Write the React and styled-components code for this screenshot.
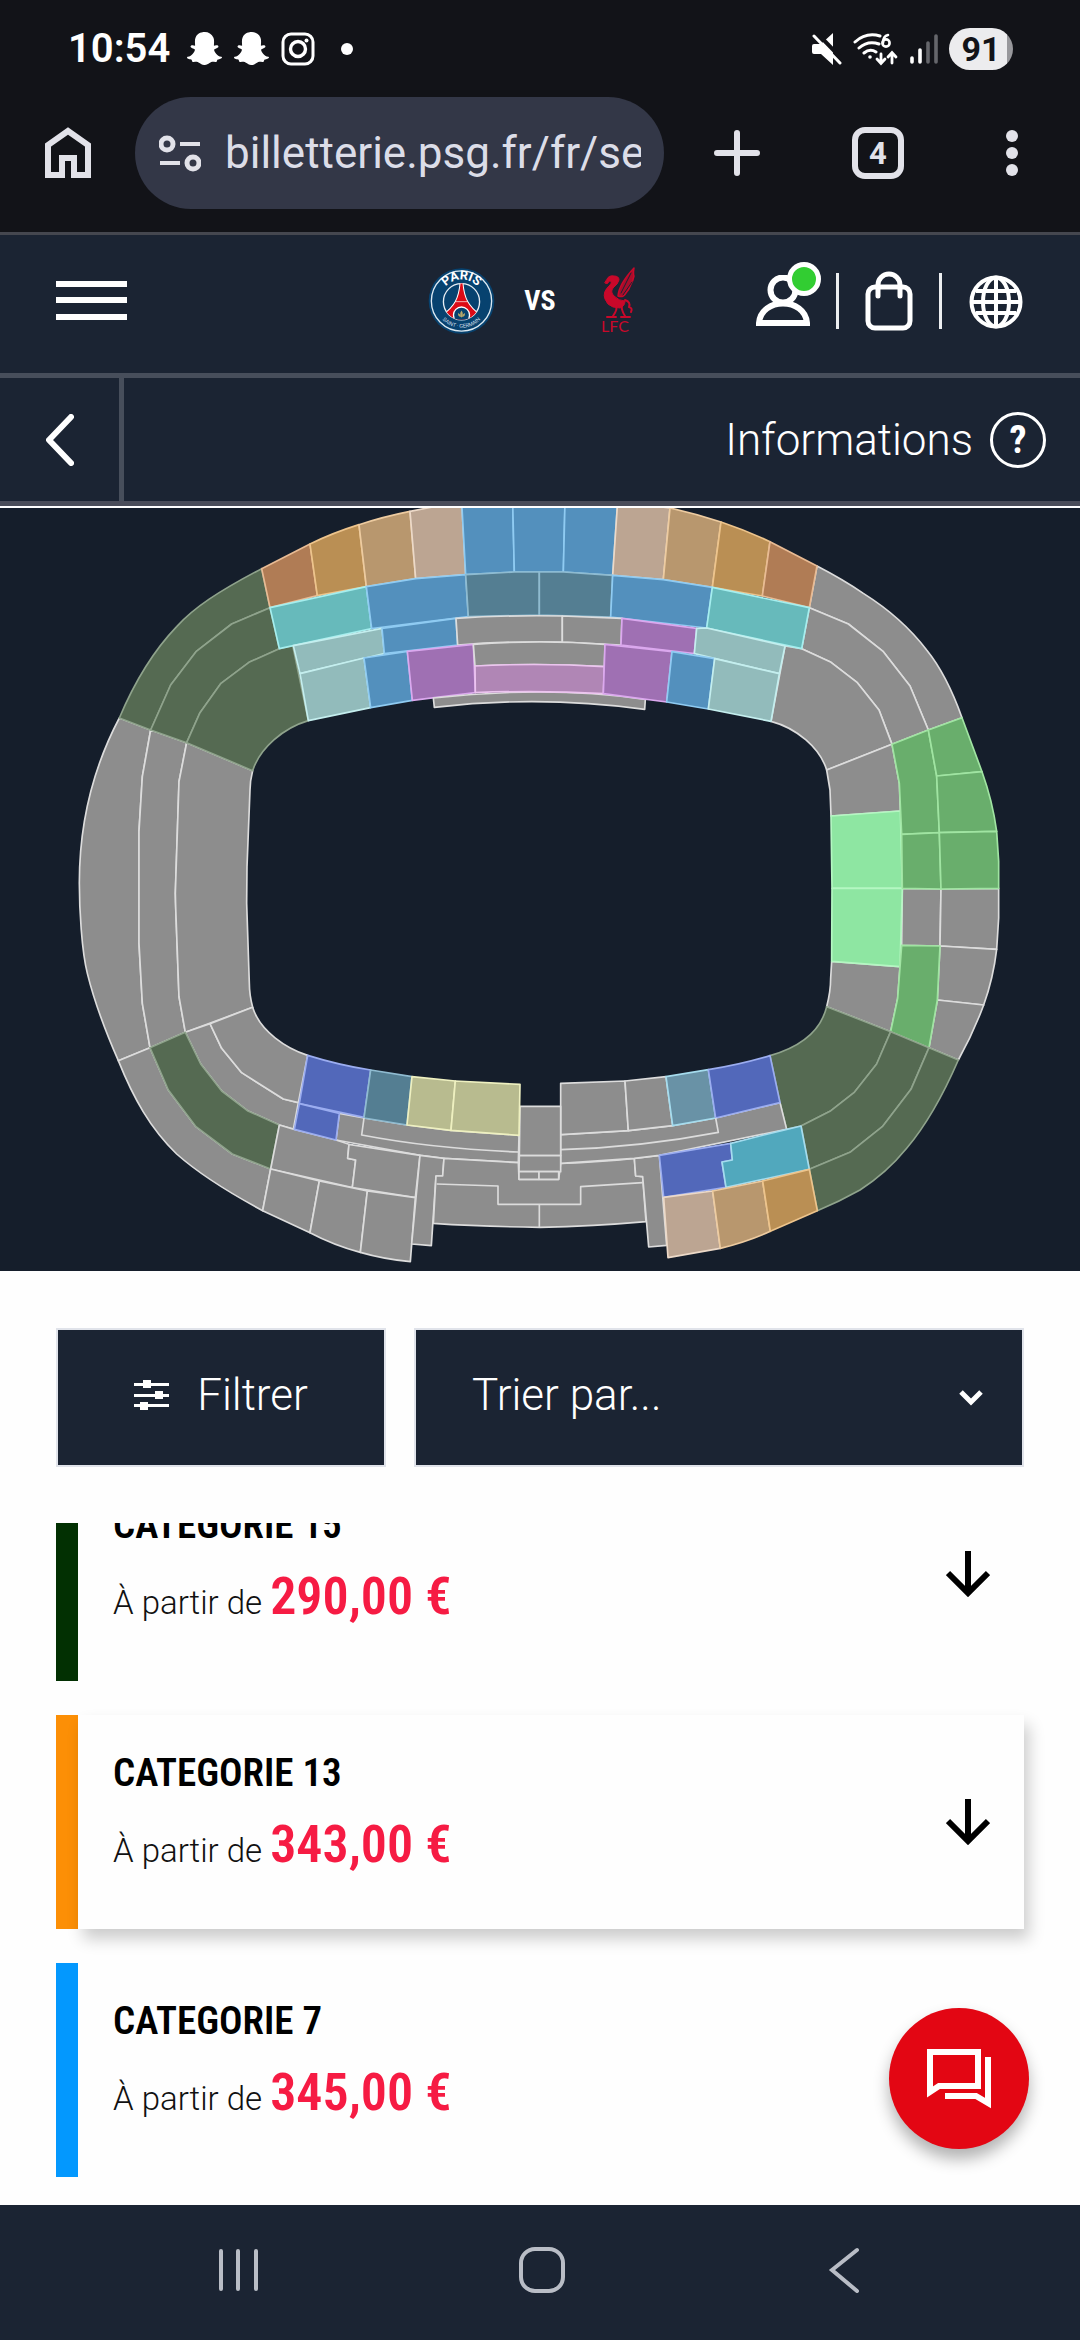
import React from 'react';
import styled, { createGlobalStyle } from 'styled-components';
import { FaSnapchatGhost } from 'react-icons/fa';

const NAVY = '#1b2433';
const CONDENSED = '"Roboto Condensed", "Liberation Sans Narrow", Roboto, sans-serif';

const GlobalStyle = createGlobalStyle`
  * {
    box-sizing: border-box;
  }
  body {
    margin: 0;
    background: #fefefe;
    font-family: Roboto, sans-serif;
  }
  button {
    display: flex;
    align-items: center;
    padding: 0;
    border: 0;
    background: none;
    color: inherit;
    font: inherit;
  }
  svg {
    display: block;
  }
`;

const Page = styled.div`
  display: flex;
  flex-direction: column;
  min-height: 100vh;
`;

const StatusBar = styled.div`
  display: flex;
  align-items: center;
  justify-content: space-between;
  height: 97px;
  padding: 0 67px 0 68px;
  background: #121318;
  color: #fff;
`;

const StatusGroup = styled.div`
  display: flex;
  align-items: center;
  gap: ${(props) => props.$gap}px;
`;

const Clock = styled.span`
  margin-right: 5px;
  font-size: 40px;
  font-weight: 600;
  line-height: 48px;
`;

const Dot = styled.span`
  width: 12px;
  height: 12px;
  margin-left: 14px;
  border-radius: 50%;
  background: #fff;
`;

const Battery = styled.span`
  width: 64px;
  height: 42px;
  border-radius: 21px;
  background: linear-gradient(90deg, #ececee 91%, #98989c 91%);
  color: #121318;
  font-size: 34px;
  font-weight: 700;
  line-height: 42px;
  text-align: center;
`;

const Toolbar = styled.div`
  display: flex;
  align-items: center;
  gap: 44px;
  padding: 0 52px 23px 45px;
  border-bottom: 3px solid #45474f;
  background: #121318;
  color: #e2e2e9;
`;

const AddressBar = styled.div`
  display: flex;
  flex: 1;
  align-items: center;
  gap: 24px;
  min-width: 0;
  height: 112px;
  padding: 0 23px 0 24px;
  border-radius: 56px;
  background: #333747;
`;

const AddressInput = styled.input`
  flex: 1;
  min-width: 0;
  padding: 0;
  border: 0;
  outline: 0;
  background: none;
  color: #dcdde8;
  font-family: Roboto, sans-serif;
  font-size: 44px;
`;

const ToolbarActions = styled.div`
  display: flex;
  align-items: center;
  gap: 92px;
  margin-left: 6px;
`;

const TabsButton = styled.button`
  justify-content: center;
  width: 52px;
  height: 52px;
  border: 6px solid #e2e2e9 !important;
  border-radius: 13px;
  font-size: 31px !important;
  font-weight: 700 !important;
`;

const MenuDots = styled.button`
  flex-direction: column;
  gap: 5px;
  width: 32px;
  span {
    width: 12px;
    height: 12px;
    border-radius: 50%;
    background: #e2e2e9;
  }
`;

const Header = styled.header`
  display: grid;
  grid-template-columns: 1fr auto 1fr;
  align-items: center;
  height: 143px;
  padding: 0 56px 6px;
  border-bottom: 5px solid #474e5b;
  background: ${NAVY};
  color: #fff;
`;

const Match = styled.div`
  display: flex;
  align-items: center;
  gap: 29px;
`;

const Versus = styled.span`
  font-family: ${CONDENSED};
  font-size: 28px;
  font-weight: 700;
  line-height: 32px;
`;

const HeaderActions = styled.div`
  display: flex;
  align-items: center;
  justify-content: flex-end;
  gap: 26px;
`;

const AccountButton = styled.button`
  position: relative;
`;

const OnlineBadge = styled.span`
  position: absolute;
  top: -13px;
  right: -11px;
  width: 34px;
  height: 34px;
  border: 5px solid #fff;
  border-radius: 50%;
  background: #32cd32;
`;

const Separator = styled.span`
  width: 3px;
  height: 56px;
  background: #eceef0;
`;

const SubHeader = styled.div`
  display: flex;
  justify-content: space-between;
  height: 130px;
  border-bottom: 2px solid #fff;
  box-shadow: inset 0 -5px #4a4d5a;
  padding-bottom: 5px;
  background: ${NAVY};
  color: #fff;
`;

const BackButton = styled.button`
  justify-content: center;
  width: 124px;
  border-right: 5px solid #474e5b !important;
`;

const InfoButton = styled.button`
  gap: 17px;
  padding-right: 34px !important;
  font-size: 44px !important;
  font-weight: 300 !important;
`;

const InfoMark = styled.span`
  width: 56px;
  height: 56px;
  border: 3px solid #fff;
  border-radius: 50%;
  font-family: ${CONDENSED};
  font-size: 38px;
  font-weight: 700;
  line-height: 50px;
  text-align: center;
`;

const MapPanel = styled.div`
  background: #151e2b;
  svg {
    width: 100%;
    height: auto;
  }
`;

const Filters = styled.div`
  display: grid;
  grid-template-columns: 330fr 610fr;
  gap: 28px;
  padding: 57px 56px 56px;
  color: #fff;
`;

const FilterButton = styled.button`
  justify-content: center;
  gap: 28px;
  height: 139px;
  padding-bottom: 6px !important;
  border: 2px solid #e0e3ea !important;
  background: ${NAVY} !important;
  font-size: 44px !important;
  font-weight: 300 !important;
`;

const SortBox = styled.div`
  display: grid;
  align-items: center;
  > * {
    grid-area: 1 / 1;
  }
  svg {
    justify-self: end;
    margin-right: 41px;
    pointer-events: none;
  }
`;

const SortSelect = styled.select`
  width: 100%;
  height: 139px;
  padding: 0 56px 6px;
  border: 2px solid #e0e3ea;
  border-radius: 0;
  appearance: none;
  background: ${NAVY};
  color: #fff;
  font-family: Roboto, sans-serif;
  font-size: 44px;
  font-weight: 300;
`;

const Offers = styled.main`
  position: relative;
  padding-bottom: 28px;
`;

/* the list is scrolled: the first card is cut by the top edge */
const OfferList = styled.div`
  display: flex;
  flex-direction: column;
  gap: 34px;
  padding: 0 56px;
  overflow: hidden;
  > :first-child {
    margin-top: -56px;
  }
`;

const Card = styled.article`
  display: flex;
  align-items: center;
  height: 214px;
  border-left: 22px solid ${(props) => props.$color};
`;

const CardBody = styled.div`
  display: flex;
  flex: 1;
  align-items: center;
  justify-content: space-between;
  height: 100%;
  padding: 0 34px 0 35px;
  background: #fefefe;
  box-shadow: ${(props) => (props.$raised ? '5px 10px 15px rgba(0, 0, 0, 0.2)' : 'none')};
`;

const CardText = styled.div`
  padding-bottom: 14px;
`;

const CardTitle = styled.h2`
  margin: 0;
  color: #000;
  font-family: ${CONDENSED};
  font-size: 39px;
  font-weight: 600;
  line-height: 48px;
`;

const CardPrice = styled.p`
  margin: 18px 0 0;
  color: #111;
  font-size: 33px;
  font-weight: 300;
  line-height: 60px;
  strong {
    color: #f61b43;
    font-family: ${CONDENSED};
    font-size: 52px;
    font-weight: 600;
  }
`;

const ChatButton = styled.button`
  position: absolute;
  right: 51px;
  bottom: 56px;
  justify-content: center;
  width: 140px;
  height: 141px;
  border-radius: 50%;
  background: #e30613 !important;
  box-shadow: 0 10px 16px rgba(0, 0, 0, 0.3);
`;

const SystemNav = styled.nav`
  display: grid;
  grid-template-columns: 1fr 44px 258px 46px 258px 46px 1fr;
  align-items: center;
  height: 135px;
  margin-top: auto;
  padding: 0 0 5px 5px;
  background: ${NAVY};
`;

const NavButton = styled.button`
  grid-column: ${(props) => props.$column};
`;

const GREY = '#8d8d8d';
const FOREST = '#556a52';
const RUST = '#b07c55';
const OCHRE = '#ba8f54';
const TAN = '#b8976e';
const BEIGE = '#bca592';
const BLUE = '#5390bd';
const SLATE = '#547e92';
const TEAL = '#67babb';
const PALE = '#92bbbb';
const PURPLE = '#9f70b3';
const MAUVE = '#b086b5';
const GREEN = '#69ae6c';
const MINT = '#8ee6a2';
const ROYAL = '#5268ba';
const KHAKI = '#b8bb8f';

const OUTLINES = {
  [GREY]: '#dcdcdc',
  [FOREST]: '#8fa38c',
  [RUST]: '#e8bb94',
  [OCHRE]: '#edc48c',
  [TAN]: '#edcba0',
  [BEIGE]: '#ecd9c8',
  [BLUE]: '#8fcbf2',
  [SLATE]: '#8fbbd0',
  [TEAL]: '#a5eeee',
  [PALE]: '#c4eeee',
  [PURPLE]: '#dba8ee',
  [MAUVE]: '#ecc4ef',
  [GREEN]: '#a0e4a2',
  [MINT]: '#b4f7c2',
  [ROYAL]: '#9badf0',
  [KHAKI]: '#eef0c0',
};

const BLOCKS = [
  // west and north-west
  [GREY, 'M358 630C300 740 238 900 238 1125C238 1200 245 1330 262 1396Q290 1510 355 1658L450 1619 427 1486 417 1306V970L427 806 452 666Z'],
  [GREY, 'M452 666L427 806 417 970V1306L427 1486 450 1619 556 1573 537 1466 527 1196 526 1156 537 821 560 704Z'],
  [GREY, 'M560 704L537 821 526 1156 527 1196 537 1466 556 1573 758 1498Q748 1460 748 1426L740 1186 741 1076 750 846Q750 820 758 788Z'],
  [FOREST, 'M785 182C655 250 580 300 530 356Q430 460 358 630L452 666 512 531 588 431 695 348 810 299Z'],
  [FOREST, 'M810 299L695 348 588 431 512 531 452 666 560 704 600 614 663 526 747 463 838 422Z'],
  [FOREST, 'M838 422L878 412 925 638C850 660 780 720 758 788L560 704 600 614 663 526 747 463Z'],
  // south-west
  [GREY, 'M355 1658L450 1619 505 1746 588 1856 697 1938 812 1983 788 2108C680 2050 600 2000 530 1938C450 1860 400 1770 355 1658Z'],
  [GREY, 'M556 1573L602 1668 665 1749 742 1808 838 1851 880 1864 895 1784 850 1773 725 1694 665 1621 630 1547Z'],
  [GREY, 'M630 1547L665 1621 725 1694 850 1773 895 1784 923 1642C860 1622 780 1570 758 1498Z'],
  [FOREST, 'M450 1619L505 1746 588 1856 697 1938 812 1983 838 1851 742 1808 665 1749 602 1668 556 1573Z'],
  // north-east
  [GREY, 'M2451 174Q2530 215 2590 256C2660 300 2730 360 2780 426Q2840 500 2886 629L2785 666 2730 534 2650 431 2545 348 2428 299Z'],
  [GREY, 'M2428 299L2545 348 2650 431 2730 534 2785 666 2676 709 2637 606 2572 524 2493 463 2405 422Z'],
  [GREY, 'M2405 422L2493 463 2572 524 2637 606 2676 709 2480 786C2460 720 2390 660 2313 640L2355 414Z'],
  // north stand, upper tier
  [RUST, 'M785 182L930 108 952 263 810 299Z'],
  [OCHRE, 'M930 108Q1000 74 1077 50L1099 236 952 263Z'],
  [TAN, 'M1077 50Q1150 26 1230 10L1247 212 1099 236Z'],
  [BEIGE, 'M1230 10L1385 -20 1397 200 1247 212Z'],
  [BLUE, 'M1385 -20H1538L1543 192 1397 200Z'],
  [BLUE, 'M1538 -20H1695L1690 192 1543 192Z'],
  [BLUE, 'M1695 -20H1853L1838 202 1690 192Z'],
  [BEIGE, 'M1853 -20L2010 0 1990 215 1838 202Z'],
  [TAN, 'M2010 0Q2090 18 2163 42L2137 238 1990 215Z'],
  [OCHRE, 'M2163 42Q2240 68 2310 101L2287 264 2137 238Z'],
  [RUST, 'M2310 101L2451 174 2428 299 2287 264Z'],
  // north stand, middle tier
  [TEAL, 'M810 299L1099 236 1115 362 838 422Z'],
  [BLUE, 'M1099 236L1247 212 1397 200 1405 326 1115 362Z'],
  [SLATE, 'M1397 200L1543 192H1618V321L1405 326Z'],
  [SLATE, 'M1618 192H1690L1838 202 1832 327 1618 321Z'],
  [BLUE, 'M1838 202L1990 215 2137 238 2120 360 1832 327Z'],
  [TEAL, 'M2137 238L2428 299 2405 422 2120 360Z'],
  // north stand, lower tier
  [PALE, 'M880 413L1146 361 1153 437 900 497Z'],
  [BLUE, 'M1146 361L1368 331 1373 411 1153 437Z'],
  [GREY, 'M1368 331Q1520 321 1687 324V402Q1520 399 1373 411Z'],
  [GREY, 'M1687 324L1866 331 1863 411 1687 402Z'],
  [PURPLE, 'M1866 331L2090 361 2083 437 1863 411Z'],
  [PALE, 'M2090 361L2120 360 2355 414 2338 497 2083 437Z'],
  [PALE, 'M900 497L1092 450 1112 599 925 638Z'],
  [BLUE, 'M1092 450L1222 430 1237 577 1112 599Z'],
  [PURPLE, 'M1222 430L1420 409 1426 554 1237 577Z'],
  [GREY, 'M1420 409Q1620 395 1815 409L1813 476Q1620 464 1425 474Z'],
  [GREY, 'M1300 570Q1460 552 1620 552Q1780 552 1936 574L1934 604Q1620 561 1303 598Z'],
  [MAUVE, 'M1425 474Q1620 464 1813 476L1810 557Q1620 546 1426 554Z'],
  [PURPLE, 'M1815 409L2016 431 2000 582 1810 557Z'],
  [BLUE, 'M2016 431L2144 452 2125 603 2000 582Z'],
  [PALE, 'M2144 452L2338 497 2313 640 2125 603Z'],
  // east stand
  [GREY, 'M2480 786L2676 709 2698 826 2701 909 2493 924 2490 846Z'],
  [GREY, 'M2495 1360L2700 1376 2693 1471 2672 1571 2480 1496Q2492 1450 2492 1410Z'],
  [GREY, 'M2707 1141L2823 1143 2820 1314 2705 1312Z'],
  [GREY, 'M2823 1143L2996 1141V1230L2990 1324 2820 1314Z'],
  [GREY, 'M2820 1314L2990 1324Q2980 1410 2951 1491L2812 1476Z'],
  [GREY, 'M2812 1476L2951 1491Q2920 1575 2875 1656L2787 1619Z'],
  [MINT, 'M2493 924L2701 909 2707 1141H2496Z'],
  [MINT, 'M2496 1141H2707L2700 1376 2495 1360Z'],
  [GREEN, 'M2676 709L2785 666 2810 804 2818 974 2705 979 2698 826Z'],
  [GREEN, 'M2705 979L2818 974 2823 1143 2707 1141Z'],
  [GREEN, 'M2705 1312L2820 1314 2812 1476 2787 1619 2672 1571 2693 1471Z'],
  [GREEN, 'M2785 666L2886 629 2946 791 2810 804Z'],
  [GREEN, 'M2810 804L2946 791Q2978 880 2990 970L2818 974Z'],
  [GREEN, 'M2818 974L2990 970 2996 1060V1141L2823 1143Z'],
  // south-east
  [FOREST, 'M2310 1643C2390 1620 2460 1580 2480 1496L2672 1571 2630 1668 2562 1754 2490 1810 2403 1854 2360 1864 2340 1784Z'],
  [FOREST, 'M2672 1571L2787 1619 2733 1744 2647 1856 2550 1933 2428 1984 2403 1854 2490 1810 2562 1754 2630 1668Z'],
  [FOREST, 'M2787 1619L2875 1656C2830 1760 2780 1850 2720 1921Q2660 1995 2580 2046Q2520 2080 2452 2108L2428 1984 2550 1933 2647 1856 2733 1744Z'],
  // south stand
  [GREY, 'M1018 1816L1092 1830 1221 1851 1353 1867 1557 1882 1555 1964 1330 1951 1260 1942 1008 1896Z'],
  [GREY, 'M838 1851L883 1864 1008 1896 1047 1909 1043 1951 1067 1956 1057 2039 812 1983Z'],
  [GREY, 'M1047 1909L1260 1942 1246 2069 1057 2039 1067 1956 1043 1951Z'],
  [GREY, 'M812 1983L958 2019 930 2174 788 2108Z'],
  [GREY, 'M958 2019L1102 2049 1081 2233Q1000 2211 930 2174Z'],
  [GREY, 'M1102 2049L1246 2069 1231 2261Q1150 2253 1081 2233Z'],
  [GREY, 'M1260 1942L1332 1951 1328 2004H1308L1294 2213 1235 2208Z'],
  [GREY, 'M1308 2004H1328L1332 1951 1555 1964 1557 2014H1676L1682 1966Q1800 1962 1903 1951L1907 2004 1928 2006 1938 2141Q1780 2155 1620 2158Q1450 2156 1300 2146Z'],
  [GREY, 'M1903 1951L1978 1942 2000 2212 1946 2217 1928 2006 1907 2004Z'],
  [GREY, 'M1682 1880L1885 1868 2018 1853 2147 1830 2340 1784 2360 1864 1978 1942 1903 1951 1682 1966Z'],
  [GREY, 'M1682 1726L1875 1719 1885 1868 1682 1880Z'],
  [GREY, 'M1875 1719L1998 1706 2018 1853 1885 1868Z'],
  [GREY, 'M1560 1795H1682V1943H1558Z'],
  [GREY, 'M1558 1943H1682V1991H1557Z'],
  [GREY, 'M1557 1991H1617V2014H1557Z'],
  [GREY, 'M1617 1991H1676V2014H1617Z'],
  [ROYAL, 'M923 1642Q1020 1672 1112 1686L1092 1828 898 1787Z'],
  [ROYAL, 'M898 1787L1018 1816 1008 1896 883 1864Z'],
  [SLATE, 'M1112 1686L1236 1706 1221 1851 1092 1830Z'],
  [KHAKI, 'M1236 1706L1366 1719 1353 1867 1221 1851Z'],
  [KHAKI, 'M1366 1719L1560 1729 1557 1882 1353 1867Z'],
  ['#6992a6', 'M1998 1706L2125 1685 2147 1830 2018 1853Z'],
  [ROYAL, 'M2125 1685Q2220 1670 2310 1643L2340 1784 2147 1830Z'],
  [ROYAL, 'M1978 1942L2192 1906 2197 1956 2166 1962 2178 2038 1991 2068Z'],
  ['#51a8bd', 'M2192 1906L2360 1864 2403 1854 2428 1984 2178 2038 2166 1962 2197 1956Z'],
  [BEIGE, 'M1991 2068L2138 2049 2161 2221 2004 2249Z'],
  [TAN, 'M2138 2049L2288 2019 2311 2170Q2240 2202 2161 2221Z'],
  [OCHRE, 'M2288 2019L2428 1984 2452 2108 2311 2170Z'],
];

// row limits drawn over the grey blocks of the south stand
const ROW_LINES = [
  'M1092 1830L1085 1881Q1300 1922 1555 1932',
  'M2147 1830L2155 1873Q1920 1918 1682 1925',
  'M1310 2028L1494 2034V2089H1742V2036L1928 2024',
  'M1618 2089V2158',
];

const OFFERS = [
  { name: 'CATEGORIE 15', price: '290,00 €', color: '#023002' },
  { name: 'CATEGORIE 13', price: '343,00 €', color: '#fc8f06', raised: true },
  { name: 'CATEGORIE 7', price: '345,00 €', color: '#0398fe' },
];

function StadiumMap() {
  return (
    <MapPanel>
      <svg viewBox="0 0 3240 2289" role="img" aria-label="Plan du stade" strokeWidth="5" strokeLinejoin="round">
        {BLOCKS.map(([fill, d]) => (
          <path key={d} d={d} fill={fill} stroke={OUTLINES[fill] || '#a5dcee'} />
        ))}
        {ROW_LINES.map((d) => (
          <path key={d} d={d} fill="none" stroke="#dcdcdc" />
        ))}
      </svg>
    </MapPanel>
  );
}

function InstagramIcon() {
  return (
    <svg width="34" height="34" viewBox="0 0 34 34" fill="none" stroke="#fff" strokeWidth="3">
      <rect x="2" y="2" width="30" height="30" rx="8" />
      <circle cx="17" cy="17" r="7.5" strokeWidth="3.4" />
      <circle cx="25.5" cy="8.5" r="2" fill="#fff" stroke="none" />
    </svg>
  );
}

function MutedIcon() {
  return (
    <svg width="30" height="32" viewBox="0 0 30 32">
      <path d="M0 13q0-2 2-2h7L21 0v32L9 21H2q-2 0-2-2z" fill="#fff" />
      <path d="M4 -1l28 29" stroke="#121318" strokeWidth="4" />
      <path d="M2 3l26 27" stroke="#fff" strokeWidth="3" strokeLinecap="round" />
    </svg>
  );
}

function WifiIcon() {
  return (
    <svg width="46" height="36" viewBox="0 0 46 36" fill="none" stroke="#fff" strokeWidth="3" strokeLinecap="round">
      <path d="M2 11q11-10 25-6M6 17q9-8 20-4M11 22q6-5 12-1" />
      <circle cx="17" cy="26" r="1.8" fill="#fff" stroke="none" />
      <path d="M35 4q-5 1-5 8" strokeWidth="2.6" />
      <circle cx="33" cy="12" r="3.6" strokeWidth="2.6" />
      <path d="M28 23v9m-4-4l4 4.500 4-4.500M39 32v-10m-4 4l4-4.500 4 4.500" strokeWidth="2.8" />
    </svg>
  );
}

function SignalIcon() {
  return (
    <svg width="28" height="32" viewBox="0 0 28 32" fill="none" strokeWidth="3.600" strokeLinecap="round">
      <path d="M2 29v-4M10 29v-12" stroke="#fff" />
      <path d="M18 29v-19M26 29V3" stroke="#65666b" />
    </svg>
  );
}

function ParisCrest() {
  return (
    <svg width="67" height="68" viewBox="0 0 100 100">
      <defs>
        <path id="crestTop" d="M18 50a32 32 0 0 1 64 0" />
        <path id="crestBottom" d="M10 50a40 40 0 0 0 80 0" />
        <clipPath id="crestDisc"><circle cx="50" cy="51" r="27" /></clipPath>
      </defs>
      <circle cx="50" cy="50" r="49" fill="#07426f" />
      <circle cx="50" cy="50" r="45" fill="none" stroke="#dce9f2" strokeWidth="2" />
      <circle cx="50" cy="51" r="27" fill="#07426f" stroke="#e6edf3" strokeWidth="2" />
      <g clipPath="url(#crestDisc)">
        <path d="M48 22h4c2 24 8 36 28 50v12H20V72c20-14 26-26 28-50z" fill="#dc0a16" stroke="#fff" strokeWidth="1.500" />
        <path d="M41 51h18" stroke="#fff" />
        <circle cx="50" cy="71" r="12" fill="#07426f" stroke="#fff" strokeWidth="2" />
      </g>
      <path d="M50 64q4 5 0 11q-4-6 0-11M45 68q3 1 4 6q-5-1-4-6M55 68q-3 1-4 6q5-1 4-6M47 75h6" fill="#b7a66a" />
      <text fill="#fff" fontFamily="Roboto, sans-serif" fontSize="19" fontWeight="700" textAnchor="middle">
        <textPath href="#crestTop" startOffset="50%">PARIS</textPath>
      </text>
      <text fill="#cfdde8" fontFamily="Roboto, sans-serif" fontSize="8" textAnchor="middle">
        <textPath href="#crestBottom" startOffset="50%">SAINT · GERMAIN</textPath>
      </text>
    </svg>
  );
}

function LiverpoolCrest() {
  return (
    <svg width="67" height="68" viewBox="0 0 67 68" fill="none" stroke="#c9082a" strokeLinecap="round" strokeLinejoin="round">
      <path d="M22 12q2-4 7-3q5 0 5 4q-1 4-6 8q-3 4 1 8q5 5 11 5q0 5-5 7l-7-1q-6-2-8-8q-3-7 5-14q3-4-1-4q-1 4-4 2z" fill="#c9082a" strokeWidth="1" />
      <path d="M33 29q1-12 16-28q-1 6 0 8q-1 5-3 8q-2 6-5 9q-3 5-8 3" fill="#a80d2b" strokeWidth="1.500" />
      <path d="M36 26l10-20M38 28l9-13" stroke="#1b2433" strokeWidth="1" />
      <path d="M31 38q2 4-3 11m9-11q-1 5 3 11M40 33q6 2 4 7q4 1 2 5M22 50h9m5 0h9" strokeWidth="2" />
      <text x="30" y="65" fill="#c9082a" stroke="none" fontFamily="Lato, sans-serif" fontSize="16" textAnchor="middle">LFC</text>
    </svg>
  );
}

function BrowserChrome() {
  return (
    <>
      <StatusBar>
        <StatusGroup $gap={12}>
          <Clock>10:54</Clock>
          <FaSnapchatGhost size={35} />
          <FaSnapchatGhost size={35} />
          <InstagramIcon />
          <Dot />
        </StatusGroup>
        <StatusGroup $gap={11}>
          <MutedIcon />
          <WifiIcon />
          <SignalIcon />
          <Battery>91</Battery>
        </StatusGroup>
      </StatusBar>
      <Toolbar>
        <button type="button" aria-label="Accueil">
          <svg width="46" height="52" viewBox="0 0 46 52" fill="none" stroke="#e2e2e9" strokeWidth="6">
            <path d="M3 48V18L23 4l20 14v30H29V31H17v17z" />
          </svg>
        </button>
        <AddressBar>
          <svg width="42" height="38" viewBox="0 0 42 38" fill="none" stroke="#e2e2e9" strokeWidth="5">
            <circle cx="8" cy="10" r="6" />
            <path d="M21 10h20M1 29h20" strokeWidth="4" />
            <circle cx="34" cy="29" r="6" />
          </svg>
          <AddressInput aria-label="Adresse" defaultValue="billetterie.psg.fr/fr/second" />
        </AddressBar>
        <ToolbarActions>
          <button type="button" aria-label="Nouvel onglet">
            <svg width="46" height="46" viewBox="0 0 46 46" stroke="#e2e2e9" strokeWidth="6" strokeLinecap="round">
              <path d="M23 3v40M3 23h40" />
            </svg>
          </button>
          <TabsButton type="button">4</TabsButton>
          <MenuDots type="button" aria-label="Menu">
            <span />
            <span />
            <span />
          </MenuDots>
        </ToolbarActions>
      </Toolbar>
    </>
  );
}

function SiteHeader() {
  return (
    <>
      <Header>
        <button type="button" aria-label="Menu principal">
          <svg width="71" height="40" viewBox="0 0 71 40" stroke="#fff" strokeWidth="6">
            <path d="M0 3h71M0 19h71M0 36h71" />
          </svg>
        </button>
        <Match>
          <ParisCrest />
          <Versus>VS</Versus>
          <LiverpoolCrest />
        </Match>
        <HeaderActions>
          <AccountButton type="button" aria-label="Mon compte">
            <svg width="54" height="52" viewBox="0 0 54 52" fill="none" stroke="#fff" strokeWidth="6">
              <circle cx="27" cy="15" r="12.500" />
              <path d="M3 48C5 22 49 22 51 48z" />
            </svg>
            <OnlineBadge />
          </AccountButton>
          <Separator />
          <button type="button" aria-label="Panier">
            <svg width="48" height="60" viewBox="0 0 48 60" fill="none" stroke="#fff" strokeWidth="5" strokeLinecap="round">
              <rect x="3" y="16" width="42" height="41" rx="7" />
              <path d="M13 25V14a11 11 0 0 1 22 0v11" />
            </svg>
          </button>
          <Separator />
          <button type="button" aria-label="Langue">
            <svg width="56" height="56" viewBox="0 0 56 56" fill="none" stroke="#fff" strokeWidth="4">
              <circle cx="28" cy="29" r="24.500" />
              <ellipse cx="28" cy="29" rx="13" ry="24.500" />
              <path d="M28 4v50M4 29h48M8 18h40M8 40h40" />
            </svg>
          </button>
        </HeaderActions>
      </Header>
      <SubHeader>
        <BackButton type="button" aria-label="Retour">
          <svg width="28" height="52" viewBox="0 0 28 52" fill="none" stroke="#fff" strokeWidth="6" strokeLinecap="round" strokeLinejoin="round">
            <path d="M25 3L3 26l22 23" />
          </svg>
        </BackButton>
        <InfoButton type="button">
          Informations
          <InfoMark>?</InfoMark>
        </InfoButton>
      </SubHeader>
    </>
  );
}

function OfferCard({ offer }) {
  return (
    <Card $color={offer.color}>
      <CardBody $raised={offer.raised}>
        <CardText>
          <CardTitle>{offer.name}</CardTitle>
          <CardPrice>
            À partir de <strong>{offer.price}</strong>
          </CardPrice>
        </CardText>
        <button type="button" aria-label={`Ouvrir ${offer.name}`}>
          <svg width="44" height="46" viewBox="0 0 44 46" fill="none" stroke="#000" strokeWidth="6">
            <path d="M22 0v42M2 22l20 20 20-20" />
          </svg>
        </button>
      </CardBody>
    </Card>
  );
}

function App() {
  return (
    <Page>
      <GlobalStyle />
      <BrowserChrome />
      <SiteHeader />
      <StadiumMap />
      <Filters>
        <FilterButton type="button">
          <svg width="35" height="30" viewBox="0 0 35 30" fill="#fff">
            <path d="M0 3h35v3H0zM0 14h35v3H0zM0 24h35v3H0z" />
            <path d="M9 0h8v8H9zM21 11h8v8h-8zM6 22h8v8H6z" />
          </svg>
          Filtrer
        </FilterButton>
        <SortBox>
          <SortSelect aria-label="Trier par" defaultValue="">
            <option value="">Trier par...</option>
            <option value="asc">Prix croissant</option>
            <option value="desc">Prix décroissant</option>
          </SortSelect>
          <svg width="24" height="18" viewBox="0 0 24 18" fill="none" stroke="#fff" strokeWidth="5">
            <path d="M2 3l10 10L22 3" />
          </svg>
        </SortBox>
      </Filters>
      <Offers>
        <OfferList>
          {OFFERS.map((offer) => (
            <OfferCard key={offer.name} offer={offer} />
          ))}
        </OfferList>
        <ChatButton type="button" aria-label="Discussion">
          <svg width="64" height="60" viewBox="0 0 64 60" fill="none" stroke="#fff" strokeWidth="6">
            <path d="M3 3h48v34H12l-9 6z" />
            <path d="M61 8v46l-12-7H18" />
          </svg>
        </ChatButton>
      </Offers>
      <SystemNav>
        <NavButton type="button" $column={2} aria-label="Applications récentes">
          <svg width="42" height="44" viewBox="0 0 42 44" stroke="#b9bdc6" strokeWidth="4" strokeLinecap="round">
            <path d="M4 3v38M21 3v38M39 3v38" />
          </svg>
        </NavButton>
        <NavButton type="button" $column={4} aria-label="Écran d'accueil">
          <svg width="46" height="46" viewBox="0 0 46 46" fill="none" stroke="#b9bdc6" strokeWidth="4">
            <rect x="2" y="2" width="42" height="42" rx="14" />
          </svg>
        </NavButton>
        <NavButton type="button" $column={6} aria-label="Page précédente">
          <svg width="46" height="46" viewBox="0 0 46 46" fill="none" stroke="#b9bdc6" strokeWidth="4" strokeLinecap="round">
            <path d="M34 3L9 23l25 21" />
          </svg>
        </NavButton>
      </SystemNav>
    </Page>
  );
}

export default App;
